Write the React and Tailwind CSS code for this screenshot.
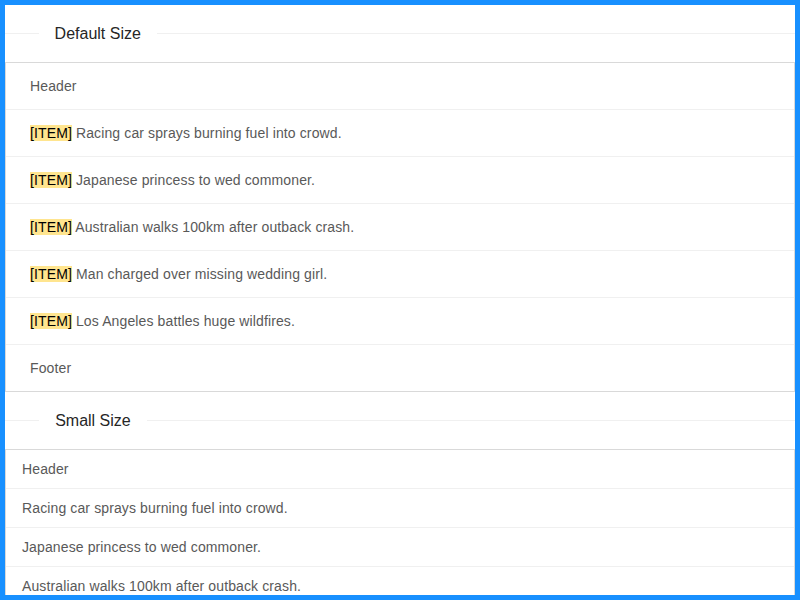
import React from 'react';

const data = [
  'Racing car sprays burning fuel into crowd.',
  'Japanese princess to wed commoner.',
  'Australian walks 100km after outback crash.',
  'Man charged over missing wedding girl.',
  'Los Angeles battles huge wildfires.',
];

function Divider({ children }) {
  return (
    <div className="flex items-center my-4 text-[16px] leading-[25px] text-[#262626]">
      <div className="flex-[5_5_0%] border-t border-[#f0f0f0]" />
      <span className="px-4 whitespace-nowrap">{children}</span>
      <div className="flex-[95_95_0%] border-t border-[#f0f0f0]" />
    </div>
  );
}

function List({ small, mark }) {
  const pad = small ? 'px-4 py-2' : 'px-6 py-3';
  return (
    <div className="border border-[#d9d9d9] text-[14px] leading-[22px] tracking-[0.12px] text-[#595959]">
      <div className={`${pad} border-b border-[#f0f0f0]`}>Header</div>
      {data.map((item) => (
        <div key={item} className={`${pad} border-b border-[#f0f0f0]`}>
          {mark && <mark className="bg-[#ffe58f] text-black p-0">[ITEM]</mark>}
          {mark && ' '}
          {item}
        </div>
      ))}
      <div className={pad}>Footer</div>
    </div>
  );
}

export default function App() {
  return (
    <div
      className="h-screen overflow-hidden border-[5px] border-[#1890ff] bg-white"
      style={{ fontFamily: '"Liberation Sans", Arial, sans-serif' }}
    >
      <Divider>Default Size</Divider>
      <List mark />
      <Divider>Small Size</Divider>
      <List small />
    </div>
  );
}
